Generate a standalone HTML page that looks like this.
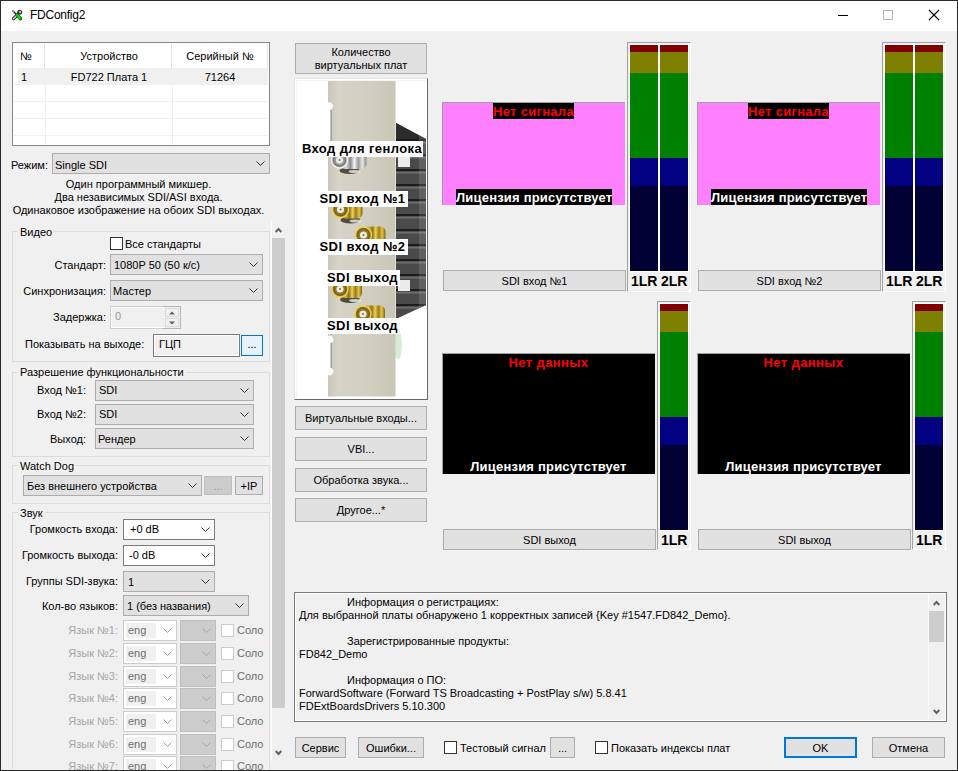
<!DOCTYPE html><html><head><meta charset="utf-8"><style>
html,body{margin:0;padding:0;}
svg{display:block;}
body{width:958px;height:771px;overflow:hidden;position:relative;background:#f0f0f0;font-family:"Liberation Sans",sans-serif;}
.b{position:absolute;box-sizing:border-box;}
.t{position:absolute;font-size:11px;line-height:13px;white-space:nowrap;color:#000;}
.c{text-align:center;}
.r{text-align:right;}
.cb{background:#e1e1e1;border:1px solid #adadad;}
.cw{background:#fff;border:1px solid #7a7a7a;}
.cd{background:#cccccc;border:1px solid #bfbfbf;}
.bt{background:#e1e1e1;border:1px solid #adadad;}
.ck{background:#fff;border:1px solid #333;}
.gp{border:1px solid #dcdcdc;}
.gl{background:#f0f0f0;padding:0 2px;}
.dis{color:#979797;}
.vb{font-weight:bold;font-size:13px;line-height:15px;}
</style></head><body>

<div class="b " style="left:0px;top:0px;width:958px;height:31px;background:#fff;"></div>
<div class="b " style="left:0px;top:0px;width:958px;height:1px;background:#2a2a2a;"></div>
<div class="b " style="left:0px;top:0px;width:1px;height:771px;background:#2a2a2a;"></div>
<div class="b " style="left:957px;top:0px;width:1px;height:771px;background:#2a2a2a;"></div>
<div class="b " style="left:0px;top:770px;width:958px;height:1px;background:#2a2a2a;"></div>
<svg class="b" style="left:11px;top:9px" width="13" height="13" viewBox="11 9 13 13">
<path d="M13.6 18.6 L17.2 15" stroke="#222" stroke-width="3.4" stroke-linecap="round"/>
<path d="M13.6 18.6 L17.2 15" stroke="#c8c8c8" stroke-width="1.6" stroke-linecap="round"/>
<circle cx="19.6" cy="12.3" r="2.5" fill="#333"/>
<circle cx="20" cy="12" r="0.9" fill="#fff"/>
<path d="M12.5 10.5 L16.5 14.5" stroke="#222" stroke-width="1.5"/>
<path d="M13 11 L14 12" stroke="#eee" stroke-width="0.6"/>
<path d="M17.4 15.5 L20.4 18.6" stroke="#006400" stroke-width="3.6" stroke-linecap="round"/>
<path d="M17.2 15.3 L20 18.2" stroke="#13d313" stroke-width="2.4" stroke-linecap="round"/>
</svg>
<div class="t" style="left:30px;top:8px;font-size:12px;line-height:15px;letter-spacing:-0.25px;">FDConfig2</div>
<div class="b " style="left:838px;top:15px;width:10px;height:1px;background:#000;"></div>
<div class="b " style="left:883px;top:10px;width:10px;height:10px;border:1px solid #b4b4b4;"></div>
<svg class="b" style="left:928px;top:9px" width="12" height="12" viewBox="0 0 12 12"><path d="M1 1 L11 11 M11 1 L1 11" stroke="#000" stroke-width="1.1"/></svg>
<div class="b " style="left:12px;top:42px;width:258px;height:104px;background:#fff;border:1px solid #828790;"></div>
<div class="b " style="left:44px;top:44px;width:1px;height:24px;background:#e5e5e5;"></div>
<div class="b " style="left:171px;top:44px;width:1px;height:24px;background:#e5e5e5;"></div>
<div class="b " style="left:267px;top:44px;width:1px;height:24px;background:#e5e5e5;"></div>
<div class="t " style="left:20px;top:50px;">№</div>
<div class="t c " style="left:46px;width:126px;top:50px;">Устройство</div>
<div class="t c " style="left:173px;width:94px;top:50px;">Серийный №</div>
<div class="b " style="left:18px;top:68px;width:250px;height:17px;background:#f0f0f0;"></div>
<div class="t " style="left:21px;top:71px;">1</div>
<div class="t c " style="left:46px;width:126px;top:71px;">FD722 Плата 1</div>
<div class="t c " style="left:173px;width:94px;top:71px;">71264</div>
<div class="b " style="left:14px;top:84px;width:254px;height:1px;background:#f0f0f0;"></div>
<div class="b " style="left:14px;top:101px;width:254px;height:1px;background:#f0f0f0;"></div>
<div class="b " style="left:14px;top:118px;width:254px;height:1px;background:#f0f0f0;"></div>
<div class="b " style="left:14px;top:135px;width:254px;height:1px;background:#f0f0f0;"></div>
<div class="b " style="left:45px;top:85px;width:1px;height:60px;background:#f0f0f0;"></div>
<div class="b " style="left:172px;top:85px;width:1px;height:60px;background:#f0f0f0;"></div>
<div class="t " style="left:11px;top:159px;">Режим:</div>
<div class="b cb" style="left:52px;top:153px;width:218px;height:21px;"></div>
<div class="b" style="left:256px;top:161px;width:9px;height:5px"><svg width="9" height="5" viewBox="0 0 9 5"><path d="M0.5 0.5 L4.5 4.5 L8.5 0.5" fill="none" stroke="#333" stroke-width="1"/></svg></div>
<div class="t " style="left:55px;top:159px;">Single SDI</div>
<div class="t c " style="left:0px;width:277px;top:178px;">Один программный микшер.</div>
<div class="t c " style="left:0px;width:277px;top:191px;">Два независимых SDI/ASI входа.</div>
<div class="t c " style="left:0px;width:277px;top:204px;">Одинаковое изображение на обоих SDI выходах.</div>
<div class="b " style="left:271px;top:222px;width:15px;height:548px;background:#f0f0f0;"></div>
<div class="b " style="left:271px;top:221px;width:1px;height:540px;background:#fff;"></div>
<svg class="b" style="left:275px;top:227px" width="7" height="6" viewBox="0 0 7 6"><path d="M0.7 5 L3.5 2 L6.3 5" fill="none" stroke="#606060" stroke-width="1.9"/></svg>
<div class="b " style="left:272px;top:238px;width:13px;height:470px;background:#cdcdcd;"></div>
<svg class="b" style="left:275px;top:750px" width="7" height="6" viewBox="0 0 7 6"><path d="M0.7 1 L3.5 4 L6.3 1" fill="none" stroke="#606060" stroke-width="1.9"/></svg>
<div class="b gp" style="left:12px;top:231px;width:258px;height:131px;"></div>
<div class="t gl" style="left:18px;top:226px;">Видео</div>
<div class="b ck" style="left:110px;top:237px;width:13px;height:13px;"></div>
<div class="t " style="left:125px;top:238px;">Все стандарты</div>
<div class="t r " style="left:-94px;width:200px;top:259px;">Стандарт:</div>
<div class="b cb" style="left:110px;top:254px;width:153px;height:21px;"></div>
<div class="b" style="left:249px;top:262px;width:9px;height:5px"><svg width="9" height="5" viewBox="0 0 9 5"><path d="M0.5 0.5 L4.5 4.5 L8.5 0.5" fill="none" stroke="#333" stroke-width="1"/></svg></div>
<div class="t " style="left:114px;top:259px;">1080P 50 (50 к/с)</div>
<div class="t r " style="left:-94px;width:200px;top:285px;">Синхронизация:</div>
<div class="b cb" style="left:110px;top:280px;width:153px;height:21px;"></div>
<div class="b" style="left:249px;top:288px;width:9px;height:5px"><svg width="9" height="5" viewBox="0 0 9 5"><path d="M0.5 0.5 L4.5 4.5 L8.5 0.5" fill="none" stroke="#333" stroke-width="1"/></svg></div>
<div class="t " style="left:113px;top:285px;">Мастер</div>
<div class="t r " style="left:-94px;width:200px;top:311px;">Задержка:</div>
<div class="b " style="left:110px;top:306px;width:71px;height:23px;background:#f0f0f0;border:1px solid #cccccc;box-shadow:inset 0 0 0 1px #fff;"></div>
<div class="b " style="left:163px;top:306px;width:18px;height:23px;border:1px solid #b4b4bc;border-left:none;"></div>
<div class="b " style="left:164px;top:307px;width:16px;height:21px;background:#f0f0f0;border-left:0;"></div>
<div class="b " style="left:165px;top:308px;width:14px;height:9px;background:#f0f0f0;border:1px solid #dadada;"></div>
<div class="b " style="left:165px;top:318px;width:14px;height:9px;background:#f0f0f0;border:1px solid #dadada;"></div>
<svg class="b" style="left:169px;top:311px" width="6" height="4"><path d="M0 3.5 L3 0.5 L6 3.5Z" fill="#606060"/></svg>
<svg class="b" style="left:169px;top:321px" width="6" height="4"><path d="M0 0.5 L3 3.5 L6 0.5Z" fill="#606060"/></svg>
<div class="t dis" style="left:115px;top:310px;">0</div>
<div class="t " style="left:25px;top:338px;">Показывать на выходе:</div>
<div class="b " style="left:153px;top:334px;width:87px;height:23px;background:#f0f0f0;border:1px solid #7a7a7a;box-shadow:inset 0 0 0 1px #fff;"></div>
<div class="t " style="left:159px;top:338px;">ГЦП</div>
<div class="b " style="left:241px;top:335px;width:22px;height:21px;background:#e5f1fb;border:1px solid #0078d7;"></div>
<div class="t c " style="left:241px;width:22px;top:338px;">...</div>
<div class="b gp" style="left:12px;top:372px;width:258px;height:85px;"></div>
<div class="t gl" style="left:18px;top:366px;">Разрешение функциональности</div>
<div class="t r " style="left:-114px;width:200px;top:384px;">Вход №1:</div>
<div class="b cb" style="left:95px;top:380px;width:159px;height:21px;"></div>
<div class="b" style="left:240px;top:388px;width:9px;height:5px"><svg width="9" height="5" viewBox="0 0 9 5"><path d="M0.5 0.5 L4.5 4.5 L8.5 0.5" fill="none" stroke="#333" stroke-width="1"/></svg></div>
<div class="t " style="left:99px;top:384px;">SDI</div>
<div class="t r " style="left:-114px;width:200px;top:408px;">Вход №2:</div>
<div class="b cb" style="left:95px;top:404px;width:159px;height:21px;"></div>
<div class="b" style="left:240px;top:412px;width:9px;height:5px"><svg width="9" height="5" viewBox="0 0 9 5"><path d="M0.5 0.5 L4.5 4.5 L8.5 0.5" fill="none" stroke="#333" stroke-width="1"/></svg></div>
<div class="t " style="left:99px;top:408px;">SDI</div>
<div class="t r " style="left:-114px;width:200px;top:433px;">Выход:</div>
<div class="b cb" style="left:95px;top:428px;width:159px;height:21px;"></div>
<div class="b" style="left:240px;top:436px;width:9px;height:5px"><svg width="9" height="5" viewBox="0 0 9 5"><path d="M0.5 0.5 L4.5 4.5 L8.5 0.5" fill="none" stroke="#333" stroke-width="1"/></svg></div>
<div class="t " style="left:98px;top:433px;">Рендер</div>
<div class="b gp" style="left:12px;top:465px;width:258px;height:39px;"></div>
<div class="t gl" style="left:18px;top:460px;">Watch Dog</div>
<div class="b cb" style="left:23px;top:475px;width:179px;height:21px;"></div>
<div class="b" style="left:188px;top:483px;width:9px;height:5px"><svg width="9" height="5" viewBox="0 0 9 5"><path d="M0.5 0.5 L4.5 4.5 L8.5 0.5" fill="none" stroke="#333" stroke-width="1"/></svg></div>
<div class="t " style="left:27px;top:480px;">Без внешнего устройства</div>
<div class="b cd" style="left:204px;top:476px;width:28px;height:19px;"></div>
<div class="t c dis" style="left:204px;width:28px;top:480px;">...</div>
<div class="b bt" style="left:235px;top:476px;width:28px;height:19px;"></div>
<div class="t c " style="left:235px;width:28px;top:480px;">+IP</div>
<div class="b gp" style="left:12px;top:512px;width:258px;height:278px;"></div>
<div class="t gl" style="left:18px;top:507px;">Звук</div>
<div class="t r " style="left:-82px;width:200px;top:523px;">Громкость входа:</div>
<div class="b cw" style="left:123px;top:519px;width:92px;height:21px;"></div>
<div class="b" style="left:201px;top:527px;width:9px;height:5px"><svg width="9" height="5" viewBox="0 0 9 5"><path d="M0.5 0.5 L4.5 4.5 L8.5 0.5" fill="none" stroke="#333" stroke-width="1"/></svg></div>
<div class="t " style="left:130px;top:523px;">+0 dB</div>
<div class="t r " style="left:-82px;width:200px;top:549px;">Громкость выхода:</div>
<div class="b cw" style="left:123px;top:545px;width:92px;height:21px;"></div>
<div class="b" style="left:201px;top:553px;width:9px;height:5px"><svg width="9" height="5" viewBox="0 0 9 5"><path d="M0.5 0.5 L4.5 4.5 L8.5 0.5" fill="none" stroke="#333" stroke-width="1"/></svg></div>
<div class="t " style="left:129px;top:549px;">-0 dB</div>
<div class="t r " style="left:-82px;width:200px;top:575px;">Группы SDI-звука:</div>
<div class="b cb" style="left:123px;top:571px;width:92px;height:21px;"></div>
<div class="b" style="left:201px;top:579px;width:9px;height:5px"><svg width="9" height="5" viewBox="0 0 9 5"><path d="M0.5 0.5 L4.5 4.5 L8.5 0.5" fill="none" stroke="#333" stroke-width="1"/></svg></div>
<div class="t " style="left:128px;top:576px;">1</div>
<div class="t r " style="left:-82px;width:200px;top:600px;">Кол-во языков:</div>
<div class="b cb" style="left:123px;top:595px;width:126px;height:21px;"></div>
<div class="b" style="left:235px;top:603px;width:9px;height:5px"><svg width="9" height="5" viewBox="0 0 9 5"><path d="M0.5 0.5 L4.5 4.5 L8.5 0.5" fill="none" stroke="#333" stroke-width="1"/></svg></div>
<div class="t " style="left:127px;top:600px;">1 (без названия)</div>
<div class="t r " style="left:-82px;width:200px;top:624px;color:#a6a6a6;">Язык №1:</div>
<div class="b " style="left:123px;top:620px;width:54px;height:21px;background:#fff;border:1px solid #cccccc;"></div>
<div class="b " style="left:126px;top:623px;width:30px;height:15px;background:#f0f0f0;"></div>
<div class="t " style="left:128px;top:624px;color:#6d6d6d;">eng</div>
<div class="b" style="left:163px;top:628px;width:9px;height:5px"><svg width="9" height="5" viewBox="0 0 9 5"><path d="M0.5 0.5 L4.5 4.5 L8.5 0.5" fill="none" stroke="#a0a0a0" stroke-width="1"/></svg></div>
<div class="b cd" style="left:180px;top:620px;width:36px;height:21px;"></div>
<div class="b" style="left:202px;top:628px;width:9px;height:5px"><svg width="9" height="5" viewBox="0 0 9 5"><path d="M0.5 0.5 L4.5 4.5 L8.5 0.5" fill="none" stroke="#a8a8a8" stroke-width="1"/></svg></div>
<div class="b " style="left:221px;top:624px;width:13px;height:13px;background:#fff;border:1px solid #cccccc;"></div>
<div class="t " style="left:237px;top:624px;color:#6d6d6d;">Соло</div>
<div class="t r " style="left:-82px;width:200px;top:647px;color:#a6a6a6;">Язык №2:</div>
<div class="b " style="left:123px;top:643px;width:54px;height:21px;background:#fff;border:1px solid #cccccc;"></div>
<div class="b " style="left:126px;top:646px;width:30px;height:15px;background:#f0f0f0;"></div>
<div class="t " style="left:128px;top:647px;color:#6d6d6d;">eng</div>
<div class="b" style="left:163px;top:651px;width:9px;height:5px"><svg width="9" height="5" viewBox="0 0 9 5"><path d="M0.5 0.5 L4.5 4.5 L8.5 0.5" fill="none" stroke="#a0a0a0" stroke-width="1"/></svg></div>
<div class="b cd" style="left:180px;top:643px;width:36px;height:21px;"></div>
<div class="b" style="left:202px;top:651px;width:9px;height:5px"><svg width="9" height="5" viewBox="0 0 9 5"><path d="M0.5 0.5 L4.5 4.5 L8.5 0.5" fill="none" stroke="#a8a8a8" stroke-width="1"/></svg></div>
<div class="b " style="left:221px;top:647px;width:13px;height:13px;background:#fff;border:1px solid #cccccc;"></div>
<div class="t " style="left:237px;top:647px;color:#6d6d6d;">Соло</div>
<div class="t r " style="left:-82px;width:200px;top:670px;color:#a6a6a6;">Язык №3:</div>
<div class="b " style="left:123px;top:666px;width:54px;height:21px;background:#fff;border:1px solid #cccccc;"></div>
<div class="b " style="left:126px;top:669px;width:30px;height:15px;background:#f0f0f0;"></div>
<div class="t " style="left:128px;top:670px;color:#6d6d6d;">eng</div>
<div class="b" style="left:163px;top:674px;width:9px;height:5px"><svg width="9" height="5" viewBox="0 0 9 5"><path d="M0.5 0.5 L4.5 4.5 L8.5 0.5" fill="none" stroke="#a0a0a0" stroke-width="1"/></svg></div>
<div class="b cd" style="left:180px;top:666px;width:36px;height:21px;"></div>
<div class="b" style="left:202px;top:674px;width:9px;height:5px"><svg width="9" height="5" viewBox="0 0 9 5"><path d="M0.5 0.5 L4.5 4.5 L8.5 0.5" fill="none" stroke="#a8a8a8" stroke-width="1"/></svg></div>
<div class="b " style="left:221px;top:670px;width:13px;height:13px;background:#fff;border:1px solid #cccccc;"></div>
<div class="t " style="left:237px;top:670px;color:#6d6d6d;">Соло</div>
<div class="t r " style="left:-82px;width:200px;top:692px;color:#a6a6a6;">Язык №4:</div>
<div class="b " style="left:123px;top:688px;width:54px;height:21px;background:#fff;border:1px solid #cccccc;"></div>
<div class="b " style="left:126px;top:691px;width:30px;height:15px;background:#f0f0f0;"></div>
<div class="t " style="left:128px;top:692px;color:#6d6d6d;">eng</div>
<div class="b" style="left:163px;top:696px;width:9px;height:5px"><svg width="9" height="5" viewBox="0 0 9 5"><path d="M0.5 0.5 L4.5 4.5 L8.5 0.5" fill="none" stroke="#a0a0a0" stroke-width="1"/></svg></div>
<div class="b cd" style="left:180px;top:688px;width:36px;height:21px;"></div>
<div class="b" style="left:202px;top:696px;width:9px;height:5px"><svg width="9" height="5" viewBox="0 0 9 5"><path d="M0.5 0.5 L4.5 4.5 L8.5 0.5" fill="none" stroke="#a8a8a8" stroke-width="1"/></svg></div>
<div class="b " style="left:221px;top:692px;width:13px;height:13px;background:#fff;border:1px solid #cccccc;"></div>
<div class="t " style="left:237px;top:692px;color:#6d6d6d;">Соло</div>
<div class="t r " style="left:-82px;width:200px;top:715px;color:#a6a6a6;">Язык №5:</div>
<div class="b " style="left:123px;top:711px;width:54px;height:21px;background:#fff;border:1px solid #cccccc;"></div>
<div class="b " style="left:126px;top:714px;width:30px;height:15px;background:#f0f0f0;"></div>
<div class="t " style="left:128px;top:715px;color:#6d6d6d;">eng</div>
<div class="b" style="left:163px;top:719px;width:9px;height:5px"><svg width="9" height="5" viewBox="0 0 9 5"><path d="M0.5 0.5 L4.5 4.5 L8.5 0.5" fill="none" stroke="#a0a0a0" stroke-width="1"/></svg></div>
<div class="b cd" style="left:180px;top:711px;width:36px;height:21px;"></div>
<div class="b" style="left:202px;top:719px;width:9px;height:5px"><svg width="9" height="5" viewBox="0 0 9 5"><path d="M0.5 0.5 L4.5 4.5 L8.5 0.5" fill="none" stroke="#a8a8a8" stroke-width="1"/></svg></div>
<div class="b " style="left:221px;top:715px;width:13px;height:13px;background:#fff;border:1px solid #cccccc;"></div>
<div class="t " style="left:237px;top:715px;color:#6d6d6d;">Соло</div>
<div class="t r " style="left:-82px;width:200px;top:738px;color:#a6a6a6;">Язык №6:</div>
<div class="b " style="left:123px;top:734px;width:54px;height:21px;background:#fff;border:1px solid #cccccc;"></div>
<div class="b " style="left:126px;top:737px;width:30px;height:15px;background:#f0f0f0;"></div>
<div class="t " style="left:128px;top:738px;color:#6d6d6d;">eng</div>
<div class="b" style="left:163px;top:742px;width:9px;height:5px"><svg width="9" height="5" viewBox="0 0 9 5"><path d="M0.5 0.5 L4.5 4.5 L8.5 0.5" fill="none" stroke="#a0a0a0" stroke-width="1"/></svg></div>
<div class="b cd" style="left:180px;top:734px;width:36px;height:21px;"></div>
<div class="b" style="left:202px;top:742px;width:9px;height:5px"><svg width="9" height="5" viewBox="0 0 9 5"><path d="M0.5 0.5 L4.5 4.5 L8.5 0.5" fill="none" stroke="#a8a8a8" stroke-width="1"/></svg></div>
<div class="b " style="left:221px;top:738px;width:13px;height:13px;background:#fff;border:1px solid #cccccc;"></div>
<div class="t " style="left:237px;top:738px;color:#6d6d6d;">Соло</div>
<div class="t r " style="left:-82px;width:200px;top:760px;color:#a6a6a6;">Язык №7:</div>
<div class="b " style="left:123px;top:756px;width:54px;height:21px;background:#fff;border:1px solid #cccccc;"></div>
<div class="b " style="left:126px;top:759px;width:30px;height:15px;background:#f0f0f0;"></div>
<div class="t " style="left:128px;top:760px;color:#6d6d6d;">eng</div>
<div class="b" style="left:163px;top:764px;width:9px;height:5px"><svg width="9" height="5" viewBox="0 0 9 5"><path d="M0.5 0.5 L4.5 4.5 L8.5 0.5" fill="none" stroke="#a0a0a0" stroke-width="1"/></svg></div>
<div class="b cd" style="left:180px;top:756px;width:36px;height:21px;"></div>
<div class="b" style="left:202px;top:764px;width:9px;height:5px"><svg width="9" height="5" viewBox="0 0 9 5"><path d="M0.5 0.5 L4.5 4.5 L8.5 0.5" fill="none" stroke="#a8a8a8" stroke-width="1"/></svg></div>
<div class="b " style="left:221px;top:760px;width:13px;height:13px;background:#fff;border:1px solid #cccccc;"></div>
<div class="t " style="left:237px;top:760px;color:#6d6d6d;">Соло</div>
<div class="b " style="left:1px;top:770px;width:956px;height:1px;background:#2a2a2a;"></div>
<div class="b bt" style="left:295px;top:43px;width:132px;height:31px;"></div>
<div class="t c " style="left:295px;width:132px;top:46px;">Количество</div>
<div class="t c " style="left:295px;width:132px;top:59px;">виртуальных плат</div>
<div class="b " style="left:294px;top:78px;width:134px;height:322px;background:#fff;border-top:1px solid #e3e3e3;border-left:1px solid #e3e3e3;border-right:1px solid #696969;border-bottom:1px solid #696969;"></div>
<svg class="b" style="left:295px;top:79px" width="132" height="320" viewBox="295 79 132 320">
<defs>
<linearGradient id="gb" x1="0" y1="0" x2="1" y2="0"><stop offset="0" stop-color="#6e5a14"/><stop offset="0.25" stop-color="#d8b43a"/><stop offset="0.4" stop-color="#8a7020"/><stop offset="0.55" stop-color="#f0d050"/><stop offset="0.7" stop-color="#9a7c20"/><stop offset="0.85" stop-color="#e6c440"/><stop offset="1" stop-color="#7a6418"/></linearGradient>
<linearGradient id="sb" x1="0" y1="0" x2="1" y2="0"><stop offset="0" stop-color="#777"/><stop offset="0.25" stop-color="#ddd"/><stop offset="0.4" stop-color="#888"/><stop offset="0.55" stop-color="#f4f4f4"/><stop offset="0.7" stop-color="#999"/><stop offset="0.85" stop-color="#e8e8e8"/><stop offset="1" stop-color="#888"/></linearGradient>
<linearGradient id="gg" x1="0" y1="0" x2="0" y2="1"><stop offset="0" stop-color="#f5d865"/><stop offset="0.5" stop-color="#c9981e"/><stop offset="1" stop-color="#7d5a0c"/></linearGradient>
<linearGradient id="sg" x1="0" y1="0" x2="0" y2="1"><stop offset="0" stop-color="#f4f4f4"/><stop offset="0.5" stop-color="#b5b5b5"/><stop offset="1" stop-color="#6d6d6d"/></linearGradient>
<linearGradient id="br" x1="0" y1="0" x2="1" y2="0"><stop offset="0" stop-color="#c8c6bb"/><stop offset="0.15" stop-color="#d6d3c7"/><stop offset="0.6" stop-color="#d2cfc2"/><stop offset="1" stop-color="#c9c5b7"/></linearGradient>
<clipPath id="hs"><path d="M396 123 L426 139 L426 305 L396 319 Z"/></clipPath>
</defs>
<rect x="295" y="79" width="132" height="320" fill="#fff"/><rect x="295" y="79" width="132" height="1" fill="#fff"/><rect x="296" y="80" width="130" height="1" fill="#f4f4f4"/><rect x="296" y="80" width="1" height="318" fill="#f4f4f4"/>
<g clip-path="url(#hs)">
<rect x="396" y="120" width="31" height="200" fill="#4a4a4a"/><rect x="396" y="120" width="31" height="19" fill="#2c2c2c"/>
<rect x="396" y="139" width="31" height="2.5" fill="#1c1c1c"/><rect x="396" y="141.5" width="31" height="2" fill="#6e6e6e"/><rect x="396" y="154" width="31" height="2.5" fill="#1c1c1c"/><rect x="396" y="156.5" width="31" height="2" fill="#6e6e6e"/><rect x="396" y="169" width="31" height="2.5" fill="#1c1c1c"/><rect x="396" y="171.5" width="31" height="2" fill="#6e6e6e"/><rect x="396" y="184" width="31" height="2.5" fill="#1c1c1c"/><rect x="396" y="186.5" width="31" height="2" fill="#6e6e6e"/><rect x="396" y="199" width="31" height="2.5" fill="#1c1c1c"/><rect x="396" y="201.5" width="31" height="2" fill="#6e6e6e"/><rect x="396" y="214" width="31" height="2.5" fill="#1c1c1c"/><rect x="396" y="216.5" width="31" height="2" fill="#6e6e6e"/><rect x="396" y="229" width="31" height="2.5" fill="#1c1c1c"/><rect x="396" y="231.5" width="31" height="2" fill="#6e6e6e"/><rect x="396" y="244" width="31" height="2.5" fill="#1c1c1c"/><rect x="396" y="246.5" width="31" height="2" fill="#6e6e6e"/><rect x="396" y="259" width="31" height="2.5" fill="#1c1c1c"/><rect x="396" y="261.5" width="31" height="2" fill="#6e6e6e"/><rect x="396" y="274" width="31" height="2.5" fill="#1c1c1c"/><rect x="396" y="276.5" width="31" height="2" fill="#6e6e6e"/><rect x="396" y="289" width="31" height="2.5" fill="#1c1c1c"/><rect x="396" y="291.5" width="31" height="2" fill="#6e6e6e"/><rect x="396" y="304" width="31" height="2.5" fill="#1c1c1c"/><rect x="396" y="306.5" width="31" height="2" fill="#6e6e6e"/>
<rect x="398" y="157" width="12" height="10" fill="#ececec"/>
<rect x="398" y="280" width="12" height="11" fill="#ececec"/>
<rect x="419" y="120" width="8" height="200" fill="#fff" opacity="0.12"/>
</g>
<path d="M328 81 L395.5 81 L395.5 396.5 L328 396.5 L328 375 A3.5 3.5 0 0 0 331 368 L331 343 A3.5 3.5 0 0 0 328 336 L328 157 L328 141 L330.5 141 L330.5 109.5 A3.5 3.5 0 0 0 328 102.5 Z" fill="url(#br)"/>
<rect x="330.5" y="110" width="1.5" height="31" fill="#9aa4ae"/>
<rect x="330.5" y="343" width="1.5" height="25" fill="#9aa4ae"/>
<ellipse cx="398" cy="345" rx="4" ry="14" fill="#b8d8b0" opacity="0.5"/>
<ellipse cx="349.5" cy="170.5" rx="10" ry="3.6" fill="#3a3626" opacity="0.85"/>
<ellipse cx="354.5" cy="171.5" rx="6" ry="1.6" fill="#fff" opacity="0.7"/>
<rect x="339.5" y="151.5" width="27" height="17.5" rx="5" fill="url(#sb)"/>
<circle cx="339.5" cy="160" r="8" fill="#9a9a9a" stroke="#f4f4f4" stroke-width="1.4"/>
<circle cx="339.5" cy="160" r="6" fill="none" stroke="#555555" stroke-width="1" opacity="0.6"/>
<circle cx="339.5" cy="160" r="3.6" fill="#ecebe2"/>
<circle cx="339.5" cy="160" r="1" fill="#8a6a30"/>
<ellipse cx="350.5" cy="220.0" rx="10" ry="3.6" fill="#3a3626" opacity="0.85"/>
<ellipse cx="355.5" cy="221.0" rx="6" ry="1.6" fill="#fff" opacity="0.7"/>
<rect x="340.5" y="201.0" width="22" height="17.5" rx="5" fill="url(#gb)"/>
<circle cx="340.5" cy="209.5" r="8" fill="#8f7526" stroke="#f2d24a" stroke-width="1.4"/>
<circle cx="340.5" cy="209.5" r="6" fill="none" stroke="#5e4c0c" stroke-width="1" opacity="0.6"/>
<circle cx="340.5" cy="209.5" r="3.6" fill="#ecebe2"/>
<circle cx="340.5" cy="209.5" r="1" fill="#8a6a30"/>
<ellipse cx="373.5" cy="245.5" rx="10" ry="3.6" fill="#3a3626" opacity="0.85"/>
<ellipse cx="378.5" cy="246.5" rx="6" ry="1.6" fill="#fff" opacity="0.7"/>
<rect x="363.5" y="226.5" width="22" height="17.5" rx="5" fill="url(#gb)"/>
<circle cx="363.5" cy="235" r="8" fill="#8f7526" stroke="#f2d24a" stroke-width="1.4"/>
<circle cx="363.5" cy="235" r="6" fill="none" stroke="#5e4c0c" stroke-width="1" opacity="0.6"/>
<circle cx="363.5" cy="235" r="3.6" fill="#ecebe2"/>
<circle cx="363.5" cy="235" r="1" fill="#8a6a30"/>
<ellipse cx="350" cy="299.5" rx="10" ry="3.6" fill="#3a3626" opacity="0.85"/>
<ellipse cx="355" cy="300.5" rx="6" ry="1.6" fill="#fff" opacity="0.7"/>
<rect x="340" y="280.5" width="22" height="17.5" rx="5" fill="url(#gb)"/>
<circle cx="340" cy="289" r="8" fill="#8f7526" stroke="#f2d24a" stroke-width="1.4"/>
<circle cx="340" cy="289" r="6" fill="none" stroke="#5e4c0c" stroke-width="1" opacity="0.6"/>
<circle cx="340" cy="289" r="3.6" fill="#ecebe2"/>
<circle cx="340" cy="289" r="1" fill="#8a6a30"/>
<ellipse cx="373" cy="324.5" rx="10" ry="3.6" fill="#3a3626" opacity="0.85"/>
<ellipse cx="378" cy="325.5" rx="6" ry="1.6" fill="#fff" opacity="0.7"/>
<rect x="363" y="305.5" width="22" height="17.5" rx="5" fill="url(#gb)"/>
<circle cx="363" cy="314" r="8" fill="#8f7526" stroke="#f2d24a" stroke-width="1.4"/>
<circle cx="363" cy="314" r="6" fill="none" stroke="#5e4c0c" stroke-width="1" opacity="0.6"/>
<circle cx="363" cy="314" r="3.6" fill="#ecebe2"/>
<circle cx="363" cy="314" r="1" fill="#8a6a30"/>
</svg>
<div class="t vb c" style="left:301px;top:141px;width:122px;height:16px;background:#fff;letter-spacing:0.4px;">Вход для генлока</div>
<div class="t vb c" style="left:317px;top:191px;width:91px;height:16px;background:#fff;letter-spacing:0.4px;">SDI вход №1</div>
<div class="t vb c" style="left:317px;top:239px;width:91px;height:16px;background:#fff;letter-spacing:0.4px;">SDI вход №2</div>
<div class="t vb c" style="left:325px;top:270px;width:75px;height:16px;background:#fff;letter-spacing:0.4px;">SDI выход</div>
<div class="t vb c" style="left:325px;top:318px;width:75px;height:16px;background:#fff;letter-spacing:0.4px;">SDI выход</div>
<div class="b bt" style="left:295px;top:406px;width:132px;height:24px;"></div>
<div class="t c " style="left:295px;width:132px;top:412px;">Виртуальные входы...</div>
<div class="b bt" style="left:295px;top:437px;width:132px;height:24px;"></div>
<div class="t c " style="left:295px;width:132px;top:443px;">VBI...</div>
<div class="b bt" style="left:295px;top:468px;width:132px;height:24px;"></div>
<div class="t c " style="left:295px;width:132px;top:474px;">Обработка звука...</div>
<div class="b bt" style="left:295px;top:498px;width:132px;height:24px;"></div>
<div class="t c " style="left:295px;width:132px;top:504px;">Другое...*</div>
<div class="b " style="left:442px;top:102px;width:183px;height:103px;background:#ff80ff;border-top:1px solid #a0a0a0;border-left:1px solid #a0a0a0;"></div>
<div class="t vb c" style="left:493px;top:103px;width:81px;height:16px;background:#000;color:#f00;padding-top:1px;box-sizing:border-box;letter-spacing:0.3px;">Нет сигнала</div>
<div class="t vb c" style="left:456px;top:189px;width:156px;height:16px;background:#000;color:#fff;letter-spacing:0.2px;padding-top:1px;box-sizing:border-box;">Лицензия присутствует</div>
<div class="b " style="left:627px;top:42px;width:64px;height:250px;background:#f0f0f0;border-left:1px solid #a0a0a0;border-top:1px solid #a0a0a0;border-right:1px solid #fff;border-bottom:1px solid #fff;"></div>
<div class="b " style="left:629px;top:44px;width:30px;height:228px;background:#fff;"></div>
<div class="b " style="left:659px;top:44px;width:30px;height:228px;background:#fff;"></div>
<div class="b " style="left:630px;top:45px;width:28px;height:7px;background:#800000;"></div>
<div class="b " style="left:630px;top:52px;width:28px;height:21px;background:#808000;"></div>
<div class="b " style="left:630px;top:73px;width:28px;height:85px;background:#008000;"></div>
<div class="b " style="left:630px;top:158px;width:28px;height:28px;background:#000080;"></div>
<div class="b " style="left:630px;top:186px;width:28px;height:85px;background:#000033;"></div>
<div class="b " style="left:660px;top:45px;width:28px;height:7px;background:#800000;"></div>
<div class="b " style="left:660px;top:52px;width:28px;height:21px;background:#808000;"></div>
<div class="b " style="left:660px;top:73px;width:28px;height:85px;background:#008000;"></div>
<div class="b " style="left:660px;top:158px;width:28px;height:28px;background:#000080;"></div>
<div class="b " style="left:660px;top:186px;width:28px;height:85px;background:#000033;"></div>
<div class="t vb" style="left:631px;top:273px;font-size:14px;line-height:16px;">1LR</div>
<div class="t vb" style="left:661px;top:273px;font-size:14px;line-height:16px;">2LR</div>
<div class="b bt" style="left:443px;top:270px;width:183px;height:21px;"></div>
<div class="t c " style="left:443px;width:183px;top:275px;">SDI вход №1</div>
<div class="b " style="left:697px;top:102px;width:183px;height:103px;background:#ff80ff;border-top:1px solid #a0a0a0;border-left:1px solid #a0a0a0;"></div>
<div class="t vb c" style="left:748px;top:103px;width:81px;height:16px;background:#000;color:#f00;padding-top:1px;box-sizing:border-box;letter-spacing:0.3px;">Нет сигнала</div>
<div class="t vb c" style="left:711px;top:189px;width:156px;height:16px;background:#000;color:#fff;letter-spacing:0.2px;padding-top:1px;box-sizing:border-box;">Лицензия присутствует</div>
<div class="b " style="left:882px;top:42px;width:64px;height:250px;background:#f0f0f0;border-left:1px solid #a0a0a0;border-top:1px solid #a0a0a0;border-right:1px solid #fff;border-bottom:1px solid #fff;"></div>
<div class="b " style="left:884px;top:44px;width:30px;height:228px;background:#fff;"></div>
<div class="b " style="left:914px;top:44px;width:30px;height:228px;background:#fff;"></div>
<div class="b " style="left:885px;top:45px;width:28px;height:7px;background:#800000;"></div>
<div class="b " style="left:885px;top:52px;width:28px;height:21px;background:#808000;"></div>
<div class="b " style="left:885px;top:73px;width:28px;height:85px;background:#008000;"></div>
<div class="b " style="left:885px;top:158px;width:28px;height:28px;background:#000080;"></div>
<div class="b " style="left:885px;top:186px;width:28px;height:85px;background:#000033;"></div>
<div class="b " style="left:915px;top:45px;width:28px;height:7px;background:#800000;"></div>
<div class="b " style="left:915px;top:52px;width:28px;height:21px;background:#808000;"></div>
<div class="b " style="left:915px;top:73px;width:28px;height:85px;background:#008000;"></div>
<div class="b " style="left:915px;top:158px;width:28px;height:28px;background:#000080;"></div>
<div class="b " style="left:915px;top:186px;width:28px;height:85px;background:#000033;"></div>
<div class="t vb" style="left:886px;top:273px;font-size:14px;line-height:16px;">1LR</div>
<div class="t vb" style="left:916px;top:273px;font-size:14px;line-height:16px;">2LR</div>
<div class="b bt" style="left:698px;top:270px;width:183px;height:21px;"></div>
<div class="t c " style="left:698px;width:183px;top:275px;">SDI вход №2</div>
<div class="b " style="left:442px;top:353px;width:213px;height:121px;background:#000;border-top:1px solid #a0a0a0;border-left:1px solid #a0a0a0;"></div>
<div class="t vb c" style="left:442px;top:355px;width:213px;color:#f00;letter-spacing:0.4px;">Нет данных</div>
<div class="t vb c" style="left:442px;top:459px;width:213px;color:#fff;letter-spacing:0.2px;">Лицензия присутствует</div>
<div class="b " style="left:657px;top:301px;width:34px;height:249px;background:#f0f0f0;border-left:1px solid #a0a0a0;border-top:1px solid #a0a0a0;border-right:1px solid #fff;border-bottom:1px solid #fff;"></div>
<div class="b " style="left:659px;top:303px;width:30px;height:228px;background:#fff;"></div>
<div class="b " style="left:660px;top:304px;width:28px;height:7px;background:#800000;"></div>
<div class="b " style="left:660px;top:311px;width:28px;height:21px;background:#808000;"></div>
<div class="b " style="left:660px;top:332px;width:28px;height:85px;background:#008000;"></div>
<div class="b " style="left:660px;top:417px;width:28px;height:28px;background:#000080;"></div>
<div class="b " style="left:660px;top:445px;width:28px;height:85px;background:#000033;"></div>
<div class="t vb" style="left:661px;top:532px;font-size:14px;line-height:16px;">1LR</div>
<div class="b bt" style="left:443px;top:529px;width:213px;height:21px;"></div>
<div class="t c " style="left:443px;width:213px;top:534px;">SDI выход</div>
<div class="b " style="left:697px;top:353px;width:213px;height:121px;background:#000;border-top:1px solid #a0a0a0;border-left:1px solid #a0a0a0;"></div>
<div class="t vb c" style="left:697px;top:355px;width:213px;color:#f00;letter-spacing:0.4px;">Нет данных</div>
<div class="t vb c" style="left:697px;top:459px;width:213px;color:#fff;letter-spacing:0.2px;">Лицензия присутствует</div>
<div class="b " style="left:912px;top:301px;width:34px;height:249px;background:#f0f0f0;border-left:1px solid #a0a0a0;border-top:1px solid #a0a0a0;border-right:1px solid #fff;border-bottom:1px solid #fff;"></div>
<div class="b " style="left:914px;top:303px;width:30px;height:228px;background:#fff;"></div>
<div class="b " style="left:915px;top:304px;width:28px;height:7px;background:#800000;"></div>
<div class="b " style="left:915px;top:311px;width:28px;height:21px;background:#808000;"></div>
<div class="b " style="left:915px;top:332px;width:28px;height:85px;background:#008000;"></div>
<div class="b " style="left:915px;top:417px;width:28px;height:28px;background:#000080;"></div>
<div class="b " style="left:915px;top:445px;width:28px;height:85px;background:#000033;"></div>
<div class="t vb" style="left:916px;top:532px;font-size:14px;line-height:16px;">1LR</div>
<div class="b bt" style="left:698px;top:529px;width:213px;height:21px;"></div>
<div class="t c " style="left:698px;width:213px;top:534px;">SDI выход</div>
<div class="b " style="left:294px;top:592px;width:653px;height:130px;background:#f0f0f0;border:1px solid #7a7a7a;box-shadow:inset 0 0 0 1px #fff;"></div>
<div class="t " style="left:347px;top:596px;">Информация о регистрациях:</div>
<div class="t " style="left:299px;top:609px;">Для выбранной платы обнаружено 1 корректных записей {Key #1547.FD842_Demo}.</div>
<div class="t " style="left:347px;top:635px;">Зарегистрированные продукты:</div>
<div class="t " style="left:299px;top:648px;">FD842_Demo</div>
<div class="t " style="left:347px;top:674px;">Информация о ПО:</div>
<div class="t " style="left:299px;top:687px;">ForwardSoftware (Forward TS Broadcasting + PostPlay s/w) 5.8.41</div>
<div class="t " style="left:299px;top:700px;">FDExtBoardsDrivers 5.10.300</div>
<div class="b " style="left:928px;top:593px;width:1px;height:128px;background:#fafafa;"></div>
<svg class="b" style="left:933px;top:600px" width="7" height="6" viewBox="0 0 7 6"><path d="M0.7 5 L3.5 2 L6.3 5" fill="none" stroke="#606060" stroke-width="1.9"/></svg>
<div class="b " style="left:929px;top:611px;width:15px;height:31px;background:#cdcdcd;"></div>
<svg class="b" style="left:933px;top:709px" width="7" height="6" viewBox="0 0 7 6"><path d="M0.7 1 L3.5 4 L6.3 1" fill="none" stroke="#606060" stroke-width="1.9"/></svg>
<div class="b bt" style="left:295px;top:737px;width:51px;height:21px;"></div>
<div class="t c " style="left:295px;width:51px;top:742px;">Сервис</div>
<div class="b bt" style="left:358px;top:737px;width:66px;height:21px;"></div>
<div class="t c " style="left:358px;width:66px;top:742px;">Ошибки...</div>
<div class="b ck" style="left:444px;top:741px;width:13px;height:13px;"></div>
<div class="t " style="left:460px;top:742px;">Тестовый сигнал</div>
<div class="b bt" style="left:550px;top:737px;width:25px;height:21px;"></div>
<div class="t c " style="left:550px;width:25px;top:742px;">...</div>
<div class="b ck" style="left:595px;top:741px;width:13px;height:13px;"></div>
<div class="t " style="left:611px;top:742px;">Показать индексы плат</div>
<div class="b " style="left:784px;top:737px;width:73px;height:21px;background:#e1e1e1;border:2px solid #0078d7;"></div>
<div class="t c " style="left:784px;width:73px;top:742px;">OK</div>
<div class="b bt" style="left:872px;top:737px;width:73px;height:21px;"></div>
<div class="t c " style="left:872px;width:73px;top:742px;">Отмена</div>
</body></html>
